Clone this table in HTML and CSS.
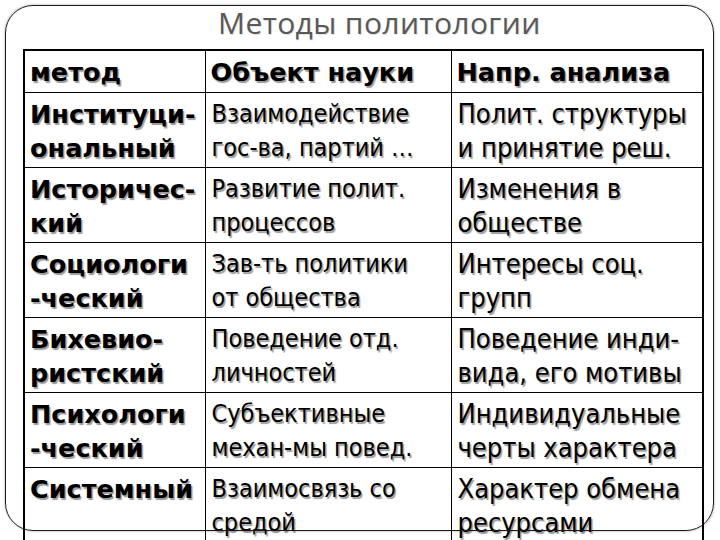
FILE: index.html
```html
<!DOCTYPE html>
<html lang="ru">
<head>
<meta charset="utf-8">
<title>Методы политологии</title>
<link rel="stylesheet" href="styles.css">
</head>
<body>
<div class="slide">
  <h1 class="title">Методы политологии</h1>
  <table class="methods">
    <colgroup>
      <col class="c1"><col class="c2"><col class="c3">
    </colgroup>
    <tr class="head">
      <td class="b">метод</td>
      <td class="b">Объект науки</td>
      <td class="b">Напр. анализа</td>
    </tr>
    <tr>
      <td class="b">Институци-<br>ональный</td>
      <td>Взаимодействие<br>гос-ва, партий …</td>
      <td class="w">Полит. структуры<br>и принятие реш.</td>
    </tr>
    <tr>
      <td class="b">Историчес-<br>кий</td>
      <td>Развитие полит.<br>процессов</td>
      <td class="w">Изменения в<br>обществе</td>
    </tr>
    <tr>
      <td class="b">Социологи<br>-ческий</td>
      <td>Зав-ть политики<br>от общества</td>
      <td class="w">Интересы соц.<br>групп</td>
    </tr>
    <tr>
      <td class="b">Бихевио-<br>ристский</td>
      <td>Поведение отд.<br>личностей</td>
      <td class="w">Поведение инди-<br>вида, его мотивы</td>
    </tr>
    <tr>
      <td class="b">Психологи<br>-ческий</td>
      <td>Субъективные<br>механ-мы повед.</td>
      <td class="w">Индивидуальные<br>черты характера</td>
    </tr>
    <tr class="last">
      <td class="b">Системный</td>
      <td>Взаимосвязь со<br>средой</td>
      <td class="w">Характер обмена<br>ресурсами</td>
    </tr>
  </table>
  <div class="frame"></div>
</div>
</body>
</html>
```
FILE: styles.css
```css
html, body {
  margin: 0;
  padding: 0;
  background: #fff;
}
.slide {
  position: relative;
  width: 720px;
  height: 540px;
  overflow: hidden;
  background: #fff;
}
.title {
  margin: 0;
  height: 49px;
  padding-left: 218px;
  font-family: "Open Sans", "Noto Sans", sans-serif;
  font-weight: 400;
  font-size: 30px;
  letter-spacing: 0.4px;
  line-height: 46px;
  color: #595959;
  text-shadow: 1px 1px 1px rgba(0,0,0,0.12);
}
.methods {
  margin-left: 23px;
  width: 679px;
  border-collapse: collapse;
  table-layout: fixed;
  border: 2px solid #000;
  background: #fff;
  font-family: "DejaVu Sans Condensed", "DejaVu Sans", sans-serif;
  font-size: 25px;
  line-height: 34px;
  color: #000;
}
.c1 { width: 181px; }
.c2 { width: 246px; }
.c3 { width: 252px; }
.methods td {
  border: 1px solid #000;
  vertical-align: top;
  padding: 4px 2px 0 6px;
  height: 70px;
  white-space: nowrap;
  text-shadow: 1.5px 1.5px 1px rgba(0,0,0,0.4);
}
.methods .head td {
  height: 37px;
}
.methods td.b {
  font-family: "DejaVu Sans", sans-serif;
  font-weight: 700;
  font-size: 25.5px;
  padding-left: 5px;
}
.methods td.w {
  font-size: 27px;
}
.methods .last td {
  height: 66px;
}
.frame {
  position: absolute;
  left: 5px;
  top: 5px;
  width: 707px;
  height: 524px;
  border: 1px solid #1a1a1a;
  border-radius: 28px;
  box-shadow: -1px -1px 2px rgba(0,0,0,0.15), 1px 1px 2px rgba(0,0,0,0.15);
  pointer-events: none;
}
```
